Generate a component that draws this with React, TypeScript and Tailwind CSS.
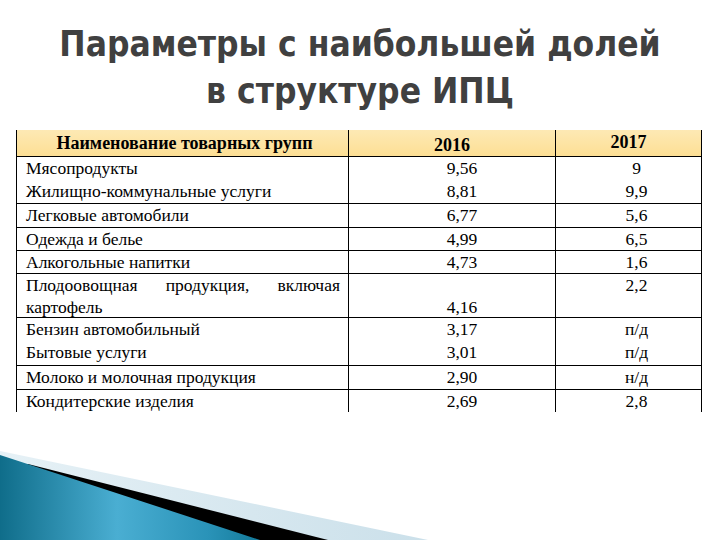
import React from 'react';

type Row = {
  names: string[];
  v16: string[];
  v17: string[];
  h: string;
  lh: string;
  justify?: boolean;
};

const rows: Row[] = [
  { names: ['Мясопродукты', 'Жилищно-коммунальные услуги'], v16: ['9,56', '8,81'], v17: ['9', '9,9'], h: 'h-[47px]', lh: 'leading-[23px]' },
  { names: ['Легковые автомобили'], v16: ['6,77'], v17: ['5,6'], h: 'h-[24px]', lh: 'leading-[23px]' },
  { names: ['Одежда и белье'], v16: ['4,99'], v17: ['6,5'], h: 'h-[23px]', lh: 'leading-[22px]' },
  { names: ['Алкогольные напитки'], v16: ['4,73'], v17: ['1,6'], h: 'h-[23px]', lh: 'leading-[22px]' },
  { names: ['Плодоовощная продукция, включая картофель'], v16: ['\u00a0', '4,16'], v17: ['2,2'], h: 'h-[44px]', lh: 'leading-[22px]', justify: true },
  { names: ['Бензин автомобильный', 'Бытовые услуги'], v16: ['3,17', '3,01'], v17: ['п/д', 'п/д'], h: 'h-[48px]', lh: 'leading-[23px]' },
  { names: ['Молоко и молочная продукция'], v16: ['2,90'], v17: ['н/д'], h: 'h-[24px]', lh: 'leading-[23px]' },
  { names: ['Кондитерские изделия'], v16: ['2,69'], v17: ['2,8'], h: 'h-[22px]', lh: 'leading-[22px]' },
];

export default function App() {
  return (
    <div className="relative w-[720px] h-[540px] overflow-hidden bg-white">
      <div className="pt-[21px] text-center text-[#404040] font-[family-name:DejaVu_Sans_Condensed,sans-serif] font-bold text-[35px] leading-[47px]">
        <div>Параметры с наибольшей долей</div>
        <div>в структуре ИПЦ</div>
      </div>

      <div className="mt-[15px] ml-[16px] w-[686px] font-[family-name:Liberation_Serif,serif] text-[17.5px] text-black">
        <div className="grid grid-cols-[332px_207px_147px] h-[27px] bg-gradient-to-b from-[#fde9b4] to-[#fddf94] border-b-[1.5px] border-black font-bold text-[18px]">
          <div className="border-l-[1.5px] border-black text-center leading-[27px] pl-[4px]">Наименование товарных групп</div>
          <div className="border-l-[1.5px] border-black text-center leading-[27px] pt-[2px]">2016</div>
          <div className="border-l-[1.5px] border-r-[1.5px] border-black text-center leading-[25px]">2017</div>
        </div>
        {rows.map((r, i) => (
          <div
            key={i}
            className={`grid grid-cols-[332px_207px_147px] ${r.h} ${r.lh} ${i < rows.length - 1 ? 'border-b-[1.5px] border-black' : ''}`}
          >
            <div className="border-l-[1.5px] border-black pl-[9px] pr-[8px]">
              {r.justify ? (
                <div className="text-justify [text-align-last:left]">{r.names[0]}</div>
              ) : (
                r.names.map((n) => <div key={n}>{n}</div>)
              )}
            </div>
            <div className="border-l-[1.5px] border-black pl-[20px] text-center">
              {r.v16.map((v, k) => <div key={k}>{v}</div>)}
            </div>
            <div className="border-l-[1.5px] border-r-[1.5px] border-black pl-[16px] text-center">
              {r.v17.map((v, k) => <div key={k}>{v}</div>)}
            </div>
          </div>
        ))}
      </div>

      <svg className="absolute left-0 bottom-0" width="720" height="100" viewBox="0 440 720 100">
        <defs>
          <linearGradient id="blue" x1="0" y1="0" x2="1" y2="0">
            <stop offset="0" stopColor="#0f6d8a" />
            <stop offset="0.45" stopColor="#4aaed2" />
            <stop offset="0.8" stopColor="#2a93b8" />
            <stop offset="1" stopColor="#137a9a" />
          </linearGradient>
          <linearGradient id="pale" x1="0" y1="0" x2="1" y2="0">
            <stop offset="0" stopColor="#e6f1f6" />
            <stop offset="1" stopColor="#cbe0ea" />
          </linearGradient>
        </defs>
        <polygon points="0,451 428,540 0,540" fill="url(#pale)" />
        <polygon points="28,464 328,540 0,540 0,464" fill="#000" />
        <polygon points="0,455 260,540 0,540" fill="url(#blue)" />
      </svg>
    </div>
  );
}
